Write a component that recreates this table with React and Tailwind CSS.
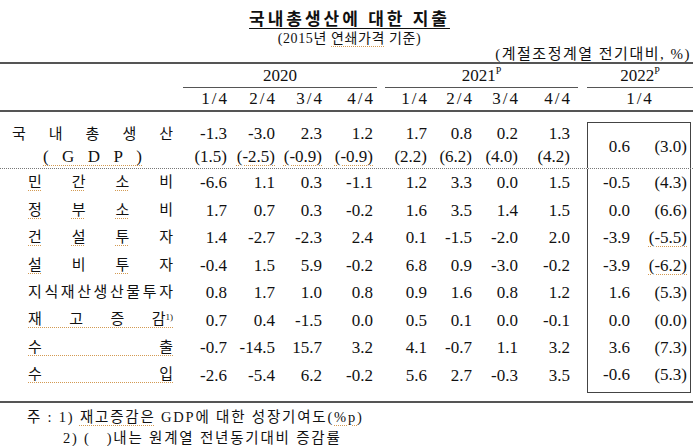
const UL = 'underline decoration-dotted decoration-[#d39a52] decoration-1 underline-offset-[3px]';

const W20 = ['w-[44px]', 'w-[48px]', 'w-[47px]', 'w-[51px]'];
const W21 = ['w-[42px]', 'w-[45px]', 'w-[46px]', 'w-[52px]'];

const rows = [
  { label: ['민', '간', '소', '비'], ul: [1, 1, 1, 0], v: ['-6.6', '1.1', '0.3', '-1.1', '1.2', '3.3', '0.0', '1.5'], a: '-0.5', b: '(4.3)' },
  { label: ['정', '부', '소', '비'], ul: [1, 1, 1, 0], v: ['1.7', '0.7', '0.3', '-0.2', '1.6', '3.5', '1.4', '1.5'], a: '0.0', b: '(6.6)' },
  { label: ['건', '설', '투', '자'], ul: [1, 1, 1, 0], v: ['1.4', '-2.7', '-2.3', '2.4', '0.1', '-1.5', '-2.0', '2.0'], a: '-3.9', b: '(-5.5)', bul: true },
  { label: ['설', '비', '투', '자'], ul: [1, 0, 1, 0], v: ['-0.4', '1.5', '5.9', '-0.2', '6.8', '0.9', '-3.0', '-0.2'], a: '-3.9', b: '(-6.2)', bul: true },
  { label: ['지', '식', '재', '산', '생', '산', '물', '투', '자'], v: ['0.8', '1.7', '1.0', '0.8', '0.9', '1.6', '0.8', '1.2'], a: '1.6', b: '(5.3)' },
  { label: ['재', '고', '증', '감'], sup: '1)', line: true, v: ['0.7', '0.4', '-1.5', '0.0', '0.5', '0.1', '0.0', '-0.1'], a: '0.0', b: '(0.0)' },
  { label: ['수', '출'], line: true, v: ['-0.7', '-14.5', '15.7', '3.2', '4.1', '-0.7', '1.1', '3.2'], a: '3.6', b: '(7.3)' },
  { label: ['수', '입'], line: true, v: ['-2.6', '-5.4', '6.2', '-0.2', '5.6', '2.7', '-0.3', '3.5'], a: '-0.6', b: '(5.3)' },
];

const gdpTop = ['-1.3', '-3.0', '2.3', '1.2', '1.7', '0.8', '0.2', '1.3'];
const gdpBot = ['(1.5)', '(-2.5)', '(-0.9)', '(-0.9)', '(2.2)', '(6.2)', '(4.0)', '(4.2)'];
const gdpUl = [1, 2, 3];

function Num({ w, v, ul }) {
  return (
    <div className={`${w} flex items-center justify-end`}>
      <span className={ul ? UL : ''}>{v}</span>
    </div>
  );
}

function Cells({ v, render }) {
  return (
    <>
      {W20.map((w, i) => render(w, v[i], i))}
      <div className="w-[12px]" />
      {W21.map((w, i) => render(w, v[i + 4], i + 4))}
      <div className="w-[17px]" />
    </>
  );
}

function Label({ chars, ul, line, sup }) {
  return (
    <div className="w-[183px] pl-[28px] pr-[10px] flex items-center text-[15px]">
      <div className={`flex-1 flex justify-between leading-[15px] ${line ? 'border-b border-dotted border-[#d39a52]' : ''}`}>
        {chars.map((c, i) => (
          <span key={i} className={ul && ul[i] ? UL : ''}>
            {c}
            {sup && i === chars.length - 1 && <sup className="text-[9px] font-['Liberation_Serif',serif]">{sup}</sup>}
          </span>
        ))}
      </div>
    </div>
  );
}

export default function App() {
  return (
    <div className="w-[699px] h-[446px] overflow-hidden bg-white text-[#111] font-['Liberation_Serif','Noto_Sans_CJK_KR',serif]">
      <div className="pt-[10px] h-[30px] text-center text-[17px] leading-[20px] font-bold tracking-[3px]">
        <span className="underline decoration-1 underline-offset-[3px]">국내총생산에 대한 지출</span>
      </div>
      <div className="mt-[1px] h-[16px] text-center text-[14px] leading-[16px] tracking-[0.6px]">
        (2015년 <span className={UL}>연쇄가격</span> 기준)
      </div>
      <div className="h-[15px] text-right pr-[8px] text-[15px] leading-[15px] tracking-[1.5px]">
        (계절조정계열 전기대비, %)
      </div>

      <div className="w-[693px] border-t-2 border-b-2 border-[#555] text-[17px]">
        <div className="flex h-[24px]">
          <div className="w-[183px]" />
          <div className="w-[194px] border-b border-[#555] flex items-center justify-center">2020</div>
          <div className="w-[8px]" />
          <div className="w-[193px] border-b border-[#555] flex items-center justify-center">
            2021<sup className="text-[10px]">P</sup>
          </div>
          <div className="w-[9px]" />
          <div className="w-[106px] border-b border-[#555] flex items-center justify-center">
            2022<sup className="text-[10px]">P</sup>
          </div>
        </div>

        <div className="flex h-[24px] border-b-2 border-[#555]">
          <div className="w-[183px]" />
          <Cells
            v={['1/4', '2/4', '3/4', '4/4', '1/4', '2/4', '3/4', '4/4']}
            render={(w, v, i) => (
              <div key={i} className={`${w} flex items-center justify-end`}>
                <span className="tracking-[2px] -mr-[2px]">{v}</span>
              </div>
            )}
          />
          <div className="w-[106px] flex items-center justify-center tracking-[2px]">1/4</div>
        </div>

        <div className="flex h-[57px] border-b border-dotted border-[#777]">
          <div className="w-[183px] pt-[10.5px] flex flex-col">
            <div className="h-[23px] flex items-center justify-between pl-[12px] pr-[10px] text-[15px]">
              {['국', '내', '총', '생', '산'].map((c, i) => <span key={i}>{c}</span>)}
            </div>
            <div className="h-[23px] flex items-center pl-[43px]">
              <div className="w-[99px] flex justify-between leading-[17px] border-b border-dotted border-[#d39a52]">
                {['(', 'G', 'D', 'P', ')'].map((c, i) => <span key={i}>{c}</span>)}
              </div>
            </div>
          </div>
          <Cells
            v={gdpTop}
            render={(w, v, i) => (
              <div key={i} className={`${w} pt-[10.5px] flex flex-col`}>
                <div className="h-[23px] flex items-center justify-end">{v}</div>
                <div className="h-[23px] flex items-center justify-end">
                  <span className={gdpUl.includes(i) ? UL : ''}>{gdpBot[i]}</span>
                </div>
              </div>
            )}
          />
          <div className="w-[104px] mt-[10px] pt-[3px] flex border-t border-x border-[#444]">
            <Num w="w-[42px]" v="0.6" />
            <Num w="w-[57px]" v="(3.0)" />
          </div>
        </div>

        {rows.map((r, ri) => {
          const last = ri === rows.length - 1;
          return (
            <div key={ri} className="flex h-[27.5px]">
              <Label chars={r.label} ul={r.ul} line={r.line} sup={r.sup} />
              <Cells v={r.v} render={(w, v, i) => <Num key={i} w={w} v={v} />} />
              <div className={`w-[104px] flex border-x border-[#444] ${last ? 'self-start h-[31px] pb-[3px] border-b' : ''}`}>
                <Num w="w-[42px]" v={r.a} />
                <Num w="w-[57px]" v={r.b} ul={r.bul} />
              </div>
            </div>
          );
        })}
        <div className="h-[12px]" />
      </div>

      <div className="pt-[4px] pl-[27px] text-[14.5px] leading-[21px] tracking-[1.8px]">
        <div>
          주 : 1) <span className={UL}>재고증감은</span> GDP에 대한 성장기여도(<span className={UL}>%p</span>)
        </div>
        <div className="pl-[36px]">
          2) (<span className="inline-block w-[16px]" />)내는 원계열 <span className={UL}>전년동기대비</span> 증감률
        </div>
      </div>
    </div>
  );
}
